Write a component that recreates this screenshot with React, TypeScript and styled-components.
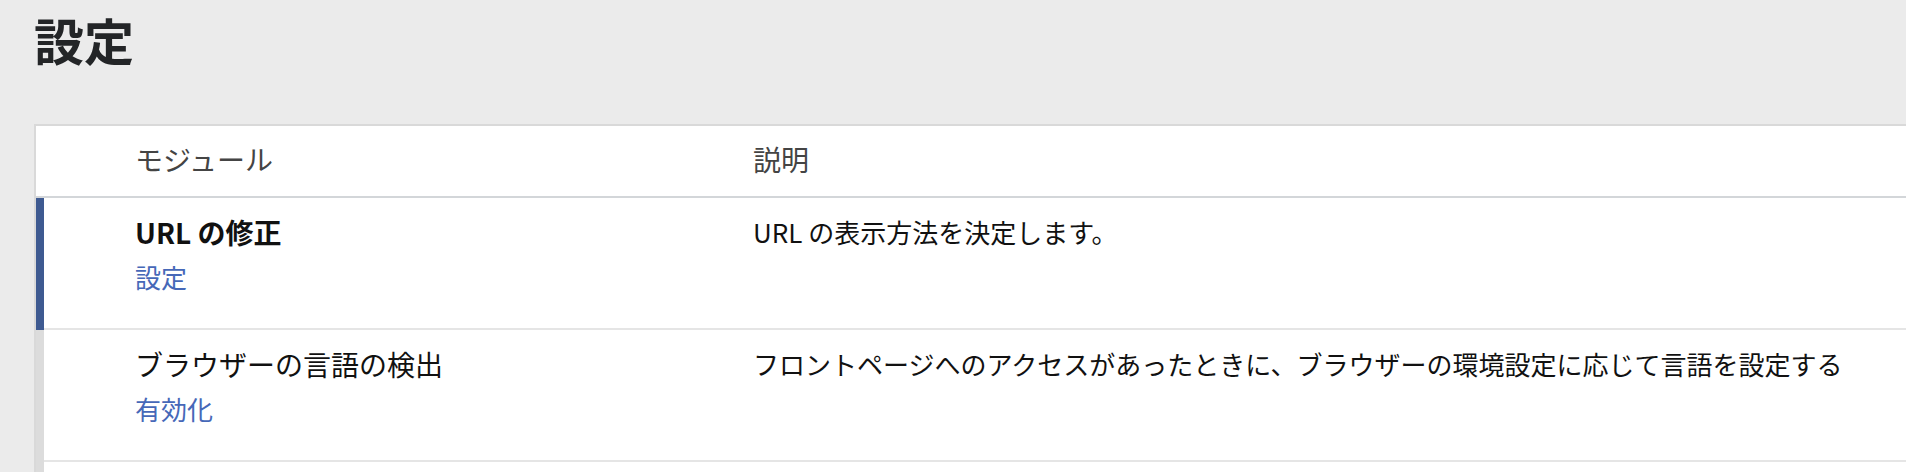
import React from "react";
import styled, { createGlobalStyle } from "styled-components";

const GlobalStyle = createGlobalStyle`
    html, body {
        margin: 0;
        padding: 0;
        background: #ebebeb;
        overflow: hidden;
    }
    body {
        font-family: "Noto Sans CJK JP", "Noto Sans", sans-serif;
        color: #222;
    }
`

const Page = styled.div`
    padding: 9px 0 0 34px;
`

const Title = styled.h1`
    margin: 0 0 55px 0;
    font-size: 50px;
    line-height: 60px;
    font-weight: 700;
    color: #232527;
`

const Table = styled.div`
    width: calc(100% + 40px);
    background: white;
    border-top: 2px solid #d9d9d9;
    border-left: 2px solid #d9d9d9;
`

const HeaderRow = styled.div`
    display: grid;
    grid-template-columns: 99px 618px 1fr;
    border-bottom: 2px solid #d3d6d9;
    padding: 13px 0 17px 0;
`

const HeaderCell = styled.div`
    font-size: 28px;
    line-height: 40px;
    color: #444;
`

const Row = styled.div`
    display: flex;
    align-items: stretch;
`

const Bar = styled.div<{ $active?: boolean }>`
    width: 8px;
    flex-shrink: 0;
    background: ${(p) => (p.$active ? "#3e5a91" : "#dcdcdc")};
`

const RowBody = styled.div`
    flex: 1;
    display: grid;
    grid-template-columns: 91px 618px 1fr;
    border-bottom: 2px solid #e5e5e5;
    padding: 14px 0 32px 0;
    min-height: 84px;
`

const ModuleCell = styled.div`
    display: flex;
    flex-direction: column;
    gap: 6px;
`

const ModuleName = styled.div<{ $bold?: boolean }>`
    font-size: 28px;
    line-height: 40px;
    font-weight: ${(p) => (p.$bold ? 700 : 400)};
    color: #111;
`

const ModuleLink = styled.a`
    font-size: 26px;
    line-height: 38px;
    color: #4668b8;
    text-decoration: none;
`

const Description = styled.div`
    font-size: 26px;
    line-height: 40px;
    color: #111;
`

const modules = [
    {
        name: "URL の修正",
        link: "設定",
        description: "URL の表示方法を決定します。",
        active: true,
    },
    {
        name: "ブラウザーの言語の検出",
        link: "有効化",
        description: "フロントページへのアクセスがあったときに、ブラウザーの環境設定に応じて言語を設定する",
        active: false,
    },
];

const App = () => {
    return <Page>
        <GlobalStyle />
        <Title>設定</Title>
        <Table>
            <HeaderRow>
                <div />
                <HeaderCell>モジュール</HeaderCell>
                <HeaderCell>説明</HeaderCell>
            </HeaderRow>
            {
                modules.map((item, index) => (
                    <Row key={index}>
                        <Bar $active={item.active} />
                        <RowBody>
                            <div />
                            <ModuleCell>
                                <ModuleName $bold={item.active}>{item.name}</ModuleName>
                                <ModuleLink href="#">{item.link}</ModuleLink>
                            </ModuleCell>
                            <Description>{item.description}</Description>
                        </RowBody>
                    </Row>
                ))
            }
            {/* next row starts just below the fold */}
            <Row>
                <Bar />
                <RowBody />
            </Row>
        </Table>
    </Page>
}

export default App;
